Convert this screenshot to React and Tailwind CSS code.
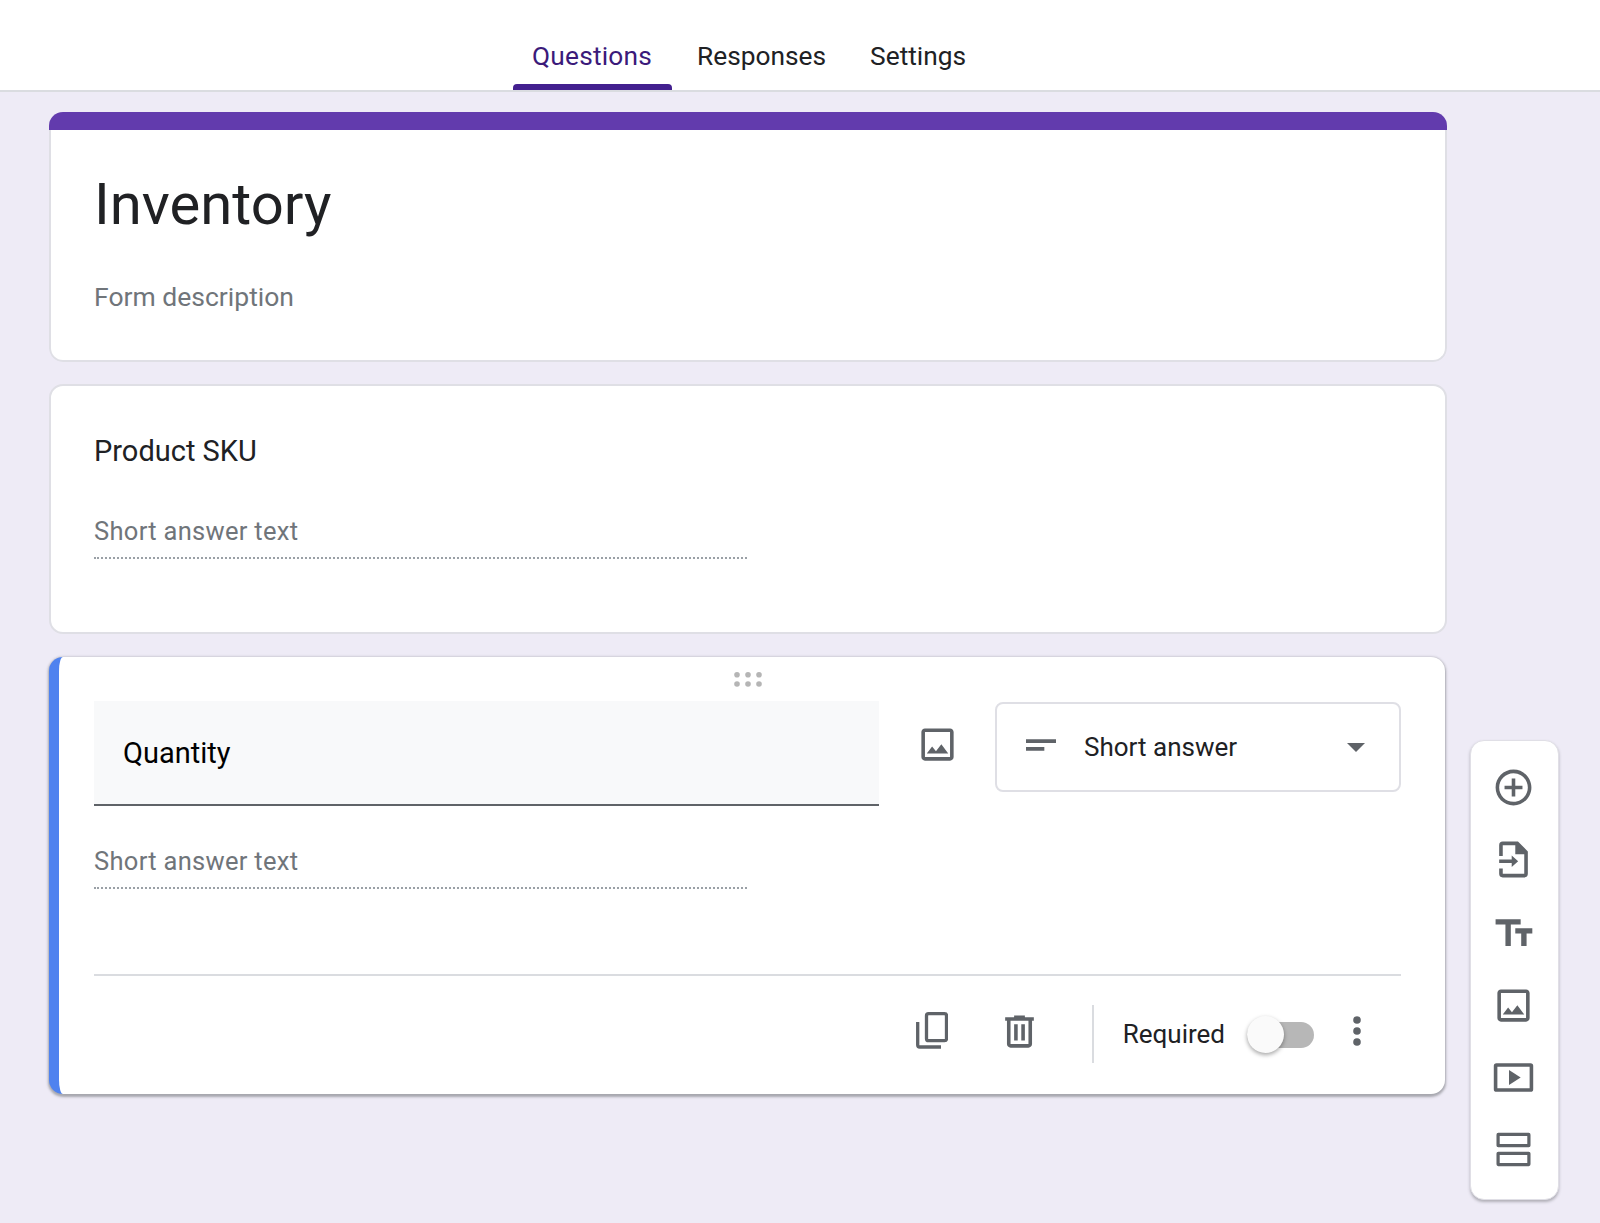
const G = "#5f6368";

function Ico({ children, size = 43, className = "" }) {
  return (
    <svg viewBox="0 0 24 24" width={size} height={size} fill={G} className={"shrink-0 " + className}>
      {children}
    </svg>
  );
}

const IMG = "M19 5v14H5V5h14m0-2H5c-1.1 0-2 .9-2 2v14c0 1.1.9 2 2 2h14c1.1 0 2-.9 2-2V5c0-1.1-.9-2-2-2zm-4.86 8.86l-3 3.87L9 13.14 6 17h12l-3.86-5.14z";

function ShortAnswerField() {
  return (
    <div className="w-[653px] border-b-2 border-dotted border-[#9aa0a6] text-[25.5px] leading-[30px] tracking-[0.3px] text-[#70757a] pb-[11px]">
      Short answer text
    </div>
  );
}

function DragDots() {
  return (
    <svg width="28" height="15" viewBox="0 0 28 15" fill="#b5b5b5" className="block">
      <circle cx="3" cy="2.800" r="2.800" /><circle cx="14" cy="2.800" r="2.800" /><circle cx="25" cy="2.800" r="2.800" />
      <circle cx="3" cy="12" r="2.800" /><circle cx="14" cy="12" r="2.800" /><circle cx="25" cy="12" r="2.800" />
    </svg>
  );
}

function Toolbar() {
  return (
    <div className="ml-[23px] mt-[648px] w-[89px] h-[460px] shrink-0 bg-white rounded-[14px] border-[1.5px] border-[#e0dfe6] shadow-[0_2px_3px_rgba(60,64,67,0.35)] flex flex-col items-center pt-[25px] pr-[2px] gap-[29px]">
      <Ico><path d="M13 7h-2v4H7v2h4v4h2v-4h4v-2h-4V7zm-1-5C6.48 2 2 6.48 2 12s4.48 10 10 10 10-4.48 10-10S17.52 2 12 2zm0 18c-4.41 0-8-3.59-8-8s3.59-8 8-8 8 3.59 8 8-3.59 8-8 8z" /></Ico>
      <Ico><path d="M6 2h8.5L20 7.5V20a2 2 0 0 1-2 2H6a2 2 0 0 1-2-2v-3h2v3h12V9h-5V4H6v6H4V4a2 2 0 0 1 2-2z" /><path d="M4 12h7V9.8L14.6 13 11 16.2V14H4z" /></Ico>
      <Ico className="mt-[2px]"><path d="M2 4v3h5.5v12h3V7H16V4H2zm20.5 5h-9.5v3h3.3v7h3v-7h3.2V9z" /></Ico>
      <Ico><path d={IMG} /></Ico>
      <Ico><path d="M2.5 4h19A1.5 1.5 0 0 1 23 5.5v13a1.5 1.5 0 0 1-1.5 1.5h-19A1.5 1.5 0 0 1 1 18.500v-13A1.5 1.5 0 0 1 2.500 4zM3 6v12h18V6H3z" fillRule="evenodd" /><path d="M9.500 7.800v8.400L16 12z" /></Ico>
      <Ico><path fillRule="evenodd" d="M3.500 2.700h17a1 1 0 0 1 1 1v6a1 1 0 0 1-1 1h-17a1 1 0 0 1-1-1v-6a1 1 0 0 1 1-1zm.8 1.800v4.400h15.400v-4.400H4.300zM3.500 13.300h17a1 1 0 0 1 1 1v6a1 1 0 0 1-1 1h-17a1 1 0 0 1-1-1v-6a1 1 0 0 1 1-1zm.8 1.800v4.400h15.400v-4.400H4.300z" /></Ico>
    </div>
  );
}

export default function App() {
  return (
    <div className="w-[1600px] h-[1223px] overflow-hidden bg-[#eeebf6] font-[Roboto,sans-serif]">
      <header className="h-[92px] bg-white border-b-2 border-[#dadce0] flex pl-[513px]">
        <nav className="flex items-end h-full text-[26.3px] leading-none">
          <div className="relative h-full flex items-center pt-[23px] pl-[19px] pr-[20px] tracking-[0.2px] text-[#3b1a7a]">
            Questions
            <span className="absolute left-0 right-0 bottom-0 h-[6px] rounded-t-[4px] bg-[#43208f]" />
          </div>
          <div className="h-full flex items-center pt-[23px] pl-[25px] pr-[22px] text-[#202124]">Responses</div>
          <div className="h-full flex items-center pt-[23px] pl-[22px] text-[#202124]">Settings</div>
        </nav>
      </header>

      <main className="flex items-start pl-[49px]">
        <div className="w-[1398px] shrink-0 pt-[20px] flex flex-col">
          <section className="h-[250px] rounded-[14px] overflow-hidden flex flex-col">
            <div className="h-[18px] shrink-0 bg-[#623bad]" />
            <div className="flex-1 bg-white rounded-b-[14px] border-2 border-t-0 border-[#dfdfe5]">
              <div className="pl-[43px] pt-[41px] text-[58px] leading-[66px] text-[#202124]">Inventory</div>
              <div className="pl-[43px] pt-[45px] text-[26.5px] leading-[30px] text-[#70757a]">Form description</div>
            </div>
          </section>

          <section className="mt-[22px] h-[250px] bg-white rounded-[14px] border-2 border-[#dfdfe5] pl-[43px] pt-[48px]">
            <div className="text-[29px] leading-[34px] text-[#202124]">Product SKU</div>
            <div className="mt-[48px]"><ShortAnswerField /></div>
          </section>

          <section className="mt-[23px] mr-[2px] h-[437px] bg-white rounded-[14px] border-l-[10px] border-l-[#4f82ef] shadow-[0_1.5px_2.5px_1px_rgba(60,64,67,0.4)] pl-[35px] pr-[44px] flex flex-col">
            <div className="h-[44px] flex justify-center pt-[15px]"><DragDots /></div>
            <div className="flex items-start">
              <div className="w-[785px] h-[105px] bg-[#f8f9fa] border-b-2 border-[#5f6368] flex items-center pl-[29px] text-[29px] leading-[34px] text-black">
                Quantity
              </div>
              <div className="ml-[37px] mt-[22px]"><Ico><path d={IMG} /></Ico></div>
              <div className="ml-[36px] w-[406px] h-[90px] mt-px rounded-[8px] border-2 border-[#dfdfe5] flex items-center pl-[24px] pr-[34px] text-[26px] leading-none text-[#202124]">
                <Ico size={40} className="mr-[23px]"><path d="M3 7.400h18v2.200H3zM3 12h11v2.200H3z" /></Ico>
                <span>Short answer</span>
                <svg viewBox="0 0 18 9" width="18" height="9" fill={G} className="ml-auto"><path d="M0 0h18l-9 9z" /></svg>
              </div>
            </div>
            <div className="mt-[40px]"><ShortAnswerField /></div>
            <div className="mt-[85px] h-[2px] bg-[#dadce0]" />
            <div className="flex items-center justify-end h-[116px] pr-[40px]">
              <svg viewBox="0 0 32 37" width="32" height="37" fill="none" stroke={G} strokeWidth="3.300" className="shrink-0 mb-[7px]">
                <rect x="10.500" y="1.700" width="20" height="27" rx="2" />
                <path d="M1.700 10v23a2 2 0 0 0 2 2H25" />
              </svg>
              <div className="ml-[50px] mb-[6px]"><Ico><path d="M15 4V3H9v1H4v2h1v13c0 1.100.9 2 2 2h10c1.100 0 2-.9 2-2V6h1V4h-5zm2 15H7V6h10v13zM9 8h2v9H9zm4 0h2v9h-2z" /></Ico></div>
              <div className="ml-[51px] w-[2px] h-[58px] bg-[#dadce0]" />
              <span className="ml-[29px] text-[26px] leading-none text-[#202124]">Required</span>
              <div className="relative ml-[22px] w-[67px] h-[26px] mt-[2px] rounded-full bg-[#b7b7b7]">
                <span className="absolute left-0 top-[-6px] w-[37px] h-[37px] rounded-full bg-[#fafafa] shadow-[0_2px_4px_rgba(0,0,0,0.35)]" />
              </div>
              <svg viewBox="0 0 8 30" width="8" height="30" fill={G} className="ml-[39px] shrink-0 mb-[7px]">
                <circle cx="4" cy="4" r="3.800" /><circle cx="4" cy="15" r="3.800" /><circle cx="4" cy="26" r="3.800" />
              </svg>
            </div>
          </section>
        </div>
        <Toolbar />
      </main>
    </div>
  );
}
